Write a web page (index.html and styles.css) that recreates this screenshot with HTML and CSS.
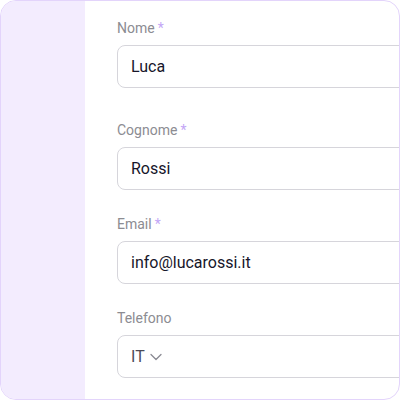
FILE: index.html
```html
<!DOCTYPE html>
<html lang="it">
<head>
<meta charset="utf-8">
<link rel="stylesheet" href="styles.css">
</head>
<body>
<div class="card">
  <aside class="sidebar"></aside>
  <main class="form">
    <div class="field first">
      <label class="label">Nome<span class="req">*</span></label>
      <div class="input">Luca</div>
    </div>
    <div class="field">
      <label class="label">Cognome<span class="req">*</span></label>
      <div class="input">Rossi</div>
    </div>
    <div class="field">
      <label class="label">Email<span class="req">*</span></label>
      <div class="input">info@lucarossi.it</div>
    </div>
    <div class="field">
      <label class="label">Telefono</label>
      <div class="input phone">
        <span class="country">IT</span>
        <svg class="chev" width="12" height="8" viewBox="0 0 12 8"><path d="M1 1.5 L6 6.5 L11 1.5" fill="none" stroke="#8a8a93" stroke-width="1.3" stroke-linecap="round" stroke-linejoin="round"/></svg>
      </div>
    </div>
  </main>
</div>
</body>
</html>
```
FILE: styles.css
```css
* { box-sizing: border-box; }
html, body { margin: 0; padding: 0; background: #ffffff; }
body { font-family: Roboto, "Noto Sans", sans-serif; }

.card {
  width: 400px;
  height: 400px;
  border: 1px solid #e3d4fb;
  border-radius: 16px;
  overflow: hidden;
  display: flex;
  background: #ffffff;
}

.sidebar {
  width: 84px;
  flex: none;
  background: #f3ecfe;
}

.form {
  flex: 1;
  padding: 17px 0 0 32px;
  display: flex;
  flex-direction: column;
  gap: 24px;
  min-width: 0;
}

.field { display: flex; flex-direction: column; gap: 7px; }
.field.first { margin-bottom: 8px; }

.label {
  font-size: 14px;
  line-height: 20px;
  color: #8c8c92;
  display: flex;
}

.req { color: #c3a6f6; margin-left: 3px; }

.input {
  width: 400px;
  height: 43px;
  border: 1px solid #d6d5db;
  border-radius: 8px;
  padding: 0 13px;
  display: flex;
  align-items: center;
  font-size: 16px;
  color: #17162a;
}

.phone { gap: 5px; }
.country { color: #4c4b57; }
.chev { margin-top: 1px; }
```
